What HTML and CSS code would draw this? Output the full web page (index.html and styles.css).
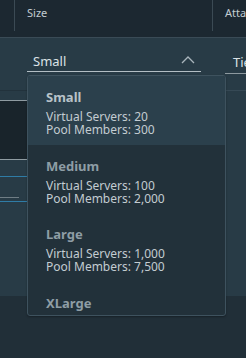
FILE: index.html
```html
<!DOCTYPE html>
<html lang="en">
  <head>
    <meta charset="UTF-8" />
    <meta name="viewport" content="width=device-width, initial-scale=1.0" />
    <title>Size</title>
    <link rel="stylesheet" href="styles.css">
  </head>
  <body>
    <div class="page">
      <div class="header">
        <div class="col col-stub"></div>
        <div class="col col-size">Size</div>
        <div class="col col-attach">Attachment</div>
      </div>

      <div class="content">
        <div class="stub">
          <div class="stub-line dark"></div>
          <div class="stub-panel"></div>
          <div class="stub-line blue first"></div>
          <div class="stub-line grey"></div>
          <div class="stub-line blue second"></div>
        </div>

        <div class="field">
          <div class="select">
            <span>Small</span>
            <svg class="chevron" width="14" height="8" viewBox="0 0 14 8">
              <polyline points="1,7 7,1 13,7" fill="none" stroke="#a9b5bc" stroke-width="1.3" />
            </svg>
          </div>

          <ul class="dropdown">
            <li class="option selected">
              <div class="option-title">Small</div>
              <div class="option-line">Virtual Servers: 20</div>
              <div class="option-line">Pool Members: 300</div>
            </li>
            <li class="option">
              <div class="option-title">Medium</div>
              <div class="option-line">Virtual Servers: 100</div>
              <div class="option-line">Pool Members: 2,000</div>
            </li>
            <li class="option">
              <div class="option-title">Large</div>
              <div class="option-line">Virtual Servers: 1,000</div>
              <div class="option-line">Pool Members: 7,500</div>
            </li>
            <li class="option">
              <div class="option-title">XLarge</div>
            </li>
          </ul>
        </div>

        <div class="field-side">
          <div class="tier">Tier-1</div>
          <div class="side-line"></div>
        </div>
      </div>
    </div>
  </body>
</html>
```

FILE: styles.css
```css
body {
  margin: 0;
  background: #212f38;
  font-family: "Noto Sans", sans-serif;
}
.page {
  width: 246px;
  height: 358px;
  overflow: hidden;
}
.header {
  display: flex;
  height: 37px;
  background: #1c2831;
  border-bottom: 1px solid #3a4b56;
  overflow: hidden;
}
.col {
  flex: none;
  height: 31px;
  box-sizing: border-box;
  padding: 5px 0 0 13px;
  font-size: 11px;
  line-height: 16px;
  color: #c3ccd1;
  white-space: nowrap;
}
.col-stub {
  width: 15px;
  padding: 0;
  border-right: 1px solid #3b4a54;
}
.col-size {
  width: 198px;
  padding-left: 12px;
  border-right: 1px solid #3b4a54;
}
.col-attach {
  flex: 1;
  min-width: 0;
  overflow: hidden;
  padding-left: 12px;
}
.content {
  position: relative;
  display: flex;
  height: 258px;
  background: #283b46;
}
.stub {
  width: 27px;
  flex: none;
  padding-top: 52px;
}
.stub-line {
  height: 1px;
}
.stub-line.dark {
  background: #22323c;
  margin-bottom: 9px;
}
.stub-panel {
  height: 58px;
  background: #19242b;
  border-top: 1px solid #8f9ba1;
  border-bottom: 1px solid #8f9ba1;
}
.stub-line.blue {
  background: #2f7ca6;
}
.stub-line.first {
  margin-top: 16px;
}
.stub-line.grey {
  width: 19px;
  background: #6f7d85;
  margin-top: 20px;
}
.stub-line.second {
  margin-top: 3px;
}
.field {
  position: relative;
  z-index: 2;
  width: 174px;
  flex: none;
}
.select {
  display: flex;
  align-items: center;
  justify-content: space-between;
  margin-top: 13px;
  height: 20px;
  padding: 0 6px 0 6px;
  border-bottom: 1px solid #b3bec4;
  font-size: 13px;
  color: #dbe2e6;
}
.chevron {
  margin-bottom: 2px;
}
.dropdown {
  position: absolute;
  top: 37px;
  left: 0;
  width: 199px;
  height: 241px;
  box-sizing: border-box;
  margin: 0;
  padding: 0;
  list-style: none;
  overflow: hidden;
  background: #22313a;
  border: 1px solid #3e525e;
  border-radius: 3px;
  box-shadow: 0 1px 2px rgba(0, 0, 0, 0.3);
}
.option {
  padding: 13px 18px 0;
  height: 68.7px;
  box-sizing: border-box;
}
.option.selected {
  background: #2b404c;
}
.option-title {
  font-size: 13px;
  font-weight: bold;
  line-height: 16px;
  color: #8e9da5;
  margin-bottom: 5px;
}
.selected .option-title {
  color: #b8c3c9;
}
.option-line {
  font-size: 12px;
  line-height: 13px;
  color: #c3ccd1;
  white-space: nowrap;
}
.field-side {
  flex: 1;
  min-width: 0;
  overflow: hidden;
  margin-left: 24px;
}
.tier {
  margin-top: 13px;
  height: 22px;
  padding-left: 8px;
  font-size: 13px;
  line-height: 22px;
  white-space: nowrap;
  color: #dbe2e6;
  border-bottom: 1px solid #8d999f;
}
.side-line {
  margin-top: 16px;
  height: 1px;
  background: #364955;
}
```
